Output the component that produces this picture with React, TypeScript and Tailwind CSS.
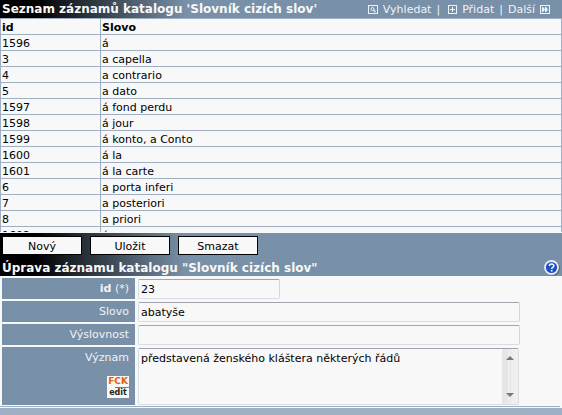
import type { ReactNode } from 'react';

const records = [
  { id: 1596, word: 'á' },
  { id: 3, word: 'a capella' },
  { id: 4, word: 'a contrario' },
  { id: 5, word: 'a dato' },
  { id: 1597, word: 'á fond perdu' },
  { id: 1598, word: 'á jour' },
  { id: 1599, word: 'á konto, a Conto' },
  { id: 1600, word: 'á la' },
  { id: 1601, word: 'á la carte' },
  { id: 6, word: 'a porta inferi' },
  { id: 7, word: 'a posteriori' },
  { id: 8, word: 'a priori' },
  { id: 1602, word: 'á' },
];

const barGradient =
  'bg-[#7890a8] bg-[linear-gradient(to_right,#000_0,#000_35px,#7890a8_185px)] bg-no-repeat';

const fieldStyle =
  'block h-5 rounded-xs border border-[#d8dfe4] border-t-[#a3a3ae] border-r-[#d3d6e0] bg-[#f8f8f8] px-0.5 text-black outline-none';

const cellStyle = 'h-4 border-b border-[#a0b0c4] px-px pt-0.5 pb-0 leading-[13px]';

const SearchIcon = () => (
  <svg className="h-[9px] w-[10px]" viewBox="0 0 10 9" fill="none" stroke="#f0f3f6">
    <rect x="0.5" y="0.5" width="9" height="8" />
    <circle cx="4.5" cy="4" r="1.5" />
    <path d="M5.7 5.2 L7.5 7" strokeWidth="1.3" />
  </svg>
);

const AddIcon = () => (
  <svg className="h-[9px] w-[9px]" viewBox="0 0 9 9" fill="none" stroke="#f0f3f6">
    <rect x="0.5" y="0.5" width="8" height="8" />
    <path d="M4.5 2v5M2 4.5h5" />
  </svg>
);

const NextIcon = () => (
  <svg className="h-[9px] w-[10px]" viewBox="0 0 10 9" fill="#f0f3f6">
    <path d="M0 0h10v9H0zM1 1v7h8V1z" fillRule="evenodd" />
    <path d="M2 2h1l2 2.5L3 7H2zM5 2h1l2 2.5L6 7H5z" />
  </svg>
);

const HelpIcon = () => (
  <svg className="h-4 w-4" viewBox="0 0 16 16">
    <circle cx="8.5" cy="8.5" r="7.3" fill="#57616c" />
    <circle cx="7.5" cy="7.5" r="7.4" fill="#e9edf2" />
    <circle cx="7.5" cy="7.5" r="5.6" fill="#1c50c8" />
    <path
      d="M5.4 6.1c0-2.9 4.4-2.8 4.4-.3 0 1.6-2.1 1.6-2.1 3.2"
      fill="none"
      stroke="#fff"
      strokeWidth="1.5"
    />
    <rect x="6.9" y="10" width="1.6" height="1.5" fill="#fff" />
  </svg>
);

const ActionButton = ({ children }: { children: ReactNode }) => (
  <button
    type="button"
    className="h-[19px] w-20 border border-black bg-[#f8f8f8] pt-0.5 text-center leading-[15px] text-black"
  >
    {children}
  </button>
);

type FieldRowProps = {
  id: string;
  label: ReactNode;
  extra?: ReactNode;
  children: ReactNode;
};

const FieldRow = ({ id, label, extra, children }: FieldRowProps) => (
  <div className="flex gap-[3px]">
    <div className="flex w-[133px] shrink-0 flex-col items-end bg-[#7890a8] px-1.5 text-[#f0f3f6]">
      <label htmlFor={id} className="leading-[21px]">
        {label}
      </label>
      {extra}
    </div>
    <div className="min-w-0 flex-1 pt-px">{children}</div>
  </div>
);

const App = () => {
  return (
    <div className="bg-[#f8f8f8] font-['DejaVu_Sans',sans-serif] text-[11px] leading-[15px] text-black">
      <header
        className={`flex h-[18px] items-center justify-between pr-3 pl-0.5 text-[#f0f3f6] ${barGradient}`}
      >
        <h1 className="text-xs font-bold whitespace-nowrap text-[#f8f8f8]">
          Seznam záznamů katalogu 'Slovník cizích slov'
        </h1>
        <nav className="flex items-center whitespace-nowrap">
          <a href="#vyhledat" className="flex items-center gap-[5px]">
            <SearchIcon />
            Vyhledat
          </a>
          <span className="mr-2 ml-[5px]">|</span>
          <a href="#pridat" className="flex items-center gap-[5px]">
            <AddIcon />
            Přidat
          </a>
          <span className="mx-[5px]">|</span>
          <a href="#dalsi" className="flex items-center gap-[5px]">
            Další
            <NextIcon />
          </a>
        </nav>
      </header>

      <div className="mb-px h-[214px] overflow-hidden border-x border-t border-[#a0b0c4]">
        <table className="w-full table-fixed border-separate border-spacing-0 text-left">
          <thead>
            <tr>
              <th className={`w-[100px] border-r ${cellStyle}`}>id</th>
              <th className={cellStyle}>Slovo</th>
            </tr>
          </thead>
          <tbody>
            {records.map((record) => (
              <tr key={record.id}>
                <td className={`border-r ${cellStyle}`}>{record.id}</td>
                <td className={cellStyle}>{record.word}</td>
              </tr>
            ))}
          </tbody>
        </table>
      </div>

      <div className={`px-0.5 pt-[3px] ${barGradient}`}>
        <div className="flex gap-2">
          <ActionButton>Nový</ActionButton>
          <ActionButton>Uložit</ActionButton>
          <ActionButton>Smazat</ActionButton>
        </div>
        <div className="flex h-[21px] items-center justify-between pt-1">
          <h2 className="text-xs font-bold text-[#f8f8f8]">
            Úprava záznamu katalogu "Slovník cizích slov"
          </h2>
          <button type="button" aria-label="Nápověda">
            <HelpIcon />
          </button>
        </div>
      </div>

      <form className="flex flex-col gap-0.5 px-0.5 pt-0.5">
        <FieldRow
          id="record-id"
          label={
            <>
              <b>id</b> (*)
            </>
          }
        >
          <input id="record-id" defaultValue="23" className={`w-[142px] ${fieldStyle}`} />
        </FieldRow>
        <FieldRow id="slovo" label="Slovo">
          <input id="slovo" defaultValue="abatyše" className={`w-full max-w-[382px] ${fieldStyle}`} />
        </FieldRow>
        <FieldRow id="vyslovnost" label="Výslovnost">
          <input id="vyslovnost" className={`w-full max-w-[382px] ${fieldStyle}`} />
        </FieldRow>
        <FieldRow
          id="vyznam"
          label="Význam"
          extra={
            <button
              type="button"
              className="mt-2 flex h-[22px] w-[22px] flex-col items-center bg-[#fbf8f4] pt-px text-[9px] leading-[9px] font-bold text-[#222]"
            >
              <span className="h-[9px] text-[#e06010]">FCK</span>
              <span className="mt-px h-px w-3.5 shrink-0 self-end bg-[#e06010]" />
              <span className="text-[8px] leading-[10px]">edit</span>
            </button>
          }
        >
          <div className="relative max-w-[381px]">
            <textarea
              id="vyznam"
              defaultValue="představená ženského kláštera některých řádů"
              className="block h-[57px] w-full resize-none overflow-hidden rounded-xs border border-[#d8dfe4] border-t-[#a3a3ae] bg-[#f8f8f8] py-0.5 pr-5 pl-0.5 outline-none"
            />
            <svg
              className="absolute top-px right-px h-[55px] w-4"
              viewBox="0 0 16 55"
              aria-hidden="true"
            >
              <rect width="16" height="55" fill="#efefef" />
              <rect width="6" height="55" fill="#e6e6e6" />
              <path d="M8.5 0v55" stroke="#e4e4e4" />
              <path d="M4 11h8L8 7z" fill="#777" />
              <path d="M4 44h8l-4 4z" fill="#777" />
            </svg>
          </div>
        </FieldRow>
      </form>
      <div className="mt-px mr-0.5 h-px bg-[#a0b0c4]" />
      <footer className="mt-px h-2 bg-[#a0b0c4]" />
    </div>
  );
};

export default App;
